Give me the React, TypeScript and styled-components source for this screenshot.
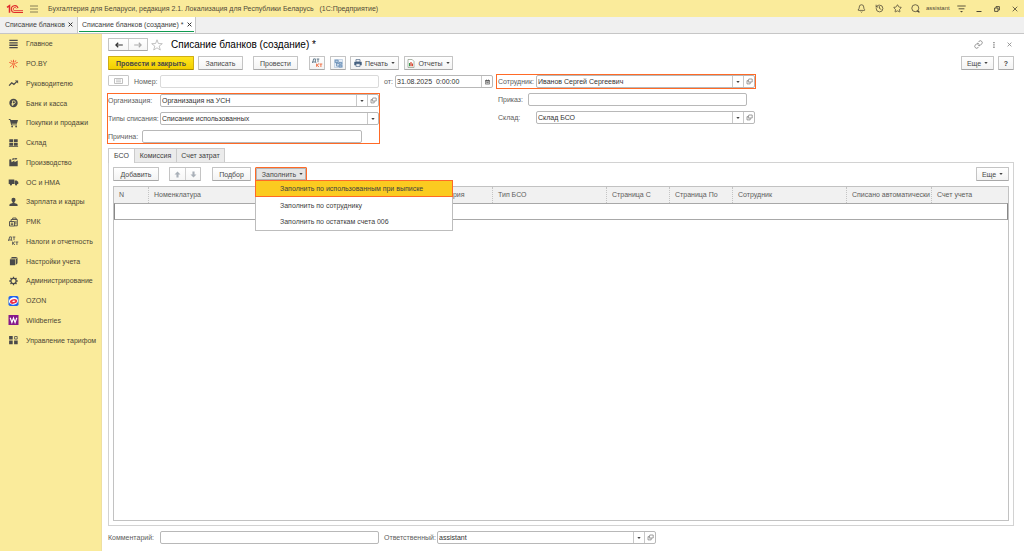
import React from 'react';
import styled, { createGlobalStyle, css } from 'styled-components';
import { Bell, History, Star, Link } from 'lucide-react';

const Global = createGlobalStyle`
  *, *::before, *::after { box-sizing: border-box; }
  body { margin: 0; background: #fff; }
  body, button, input, select, table {
    font-family: "Liberation Sans", Arial, sans-serif;
    font-size: 7px;
    line-height: 9px;
    color: #404040;
  }
  button, input, select { margin: 0; padding: 0; border: 0; border-radius: 0; background: none; outline: 0; }
  svg { display: block; flex: none; }
`;

const line = '#c6c6c6';
const accent = '#ff6a26';

const Page = styled.div`
  display: flex;
  flex-direction: column;
  min-height: 100vh;
`;

const TopBar = styled.header`
  display: flex;
  align-items: center;
  height: 17px;
  padding-left: 6px;
  background: #faeb9b;
  color: #504a38;
`;

const AppTitle = styled.span`
  margin-left: 5px;
  flex: 1;
  white-space: pre;
`;

const BarIcon = styled.button<{ $w?: number }>`
  display: flex;
  justify-content: center;
  align-items: center;
  flex: none;
  width: ${(p) => p.$w ?? 18}px;
  height: 15px;
  color: #4c4636;
`;

const UserName = styled.span`
  width: 26px;
  margin-left: 2px;
  font-size: 6px;
`;

const WindowTabs = styled.nav`
  display: flex;
  height: 17px;
  background: #f0f0f0;
  border-bottom: 1px solid ${line};
`;

const WindowTab = styled.div<{ $active?: boolean }>`
  display: flex;
  padding: 0 1px;
  border-right: 1px solid ${line};
  background: ${(p) => (p.$active ? '#fff' : 'transparent')};
`;

const TabLink = styled.a`
  color: #404040;
  text-decoration: none;
  white-space: nowrap;
`;

const TabInner = styled.div<{ $active?: boolean }>`
  display: flex;
  align-items: center;
  gap: 3px;
  height: 15px;
  padding: 0 ${(p) => (p.$active ? 2 : 3)}px 0 ${(p) => (p.$active ? 3 : 4)}px;
  border-bottom: 1px solid ${(p) => (p.$active ? '#0f9a50' : 'transparent')};
`;

const Body = styled.div`
  display: flex;
  flex: 1;
`;

const Sidebar = styled.nav`
  flex: none;
  width: 102px;
  background: #faeb9b;
  border-right: 1px solid #efe0a0;
`;

const SideList = styled.ul`
  display: grid;
  grid-auto-rows: 1fr;
  height: 316px;
  margin: 0;
  padding: 0;
  list-style: none;
`;

const SideLink = styled.a`
  display: flex;
  align-items: center;
  gap: 7px;
  height: 100%;
  padding-left: 8px;
  color: #4c4636;
  text-decoration: none;
  white-space: nowrap;
`;

const Main = styled.main`
  display: flex;
  flex-direction: column;
  flex: 1;
  min-width: 0;
  padding: 4px 10px 7px 6px;
`;

const Heading = styled.div`
  display: flex;
  align-items: center;
  height: 13px;
`;

const Title = styled.h1`
  flex: 1;
  margin: 0 0 0 5px;
  font-size: 10px;
  line-height: 13px;
  font-weight: 400;
  color: #000;
`;

const Bar = styled.div<{ $top?: number }>`
  display: flex;
  align-items: center;
  height: 14px;
  margin-top: ${(p) => p.$top ?? 0}px;
`;

const Spacer = styled.span`
  flex: 1;
`;

const Button = styled.button<{ $w: number; $ml?: number; $primary?: boolean; $open?: boolean }>`
  display: flex;
  align-items: center;
  justify-content: center;
  gap: 3px;
  flex: none;
  width: ${(p) => p.$w}px;
  height: 14px;
  margin-left: ${(p) => p.$ml ?? 0}px;
  border: 1px solid #c4c4c4;
  border-bottom-color: #a8a8a8;
  border-radius: 1px;
  background: linear-gradient(#fff, #f3f3f3);
  color: #484848;
  white-space: nowrap;
  ${(p) => p.$primary && css`
    border-color: #cfae14;
    border-bottom-color: #a98c00;
    background: linear-gradient(#ffe51f, #f2cf00);
    font-weight: 700;
  `}
  ${(p) => p.$open && css`
    padding-left: 3px;
    border-color: ${accent};
    background: #e4e4e4;
    box-shadow: inset 0 0 0 1px #b4b4b4;
  `}
`;

const Pair = styled.div<{ $ml?: number }>`
  display: flex;
  flex: none;
  margin-left: ${(p) => p.$ml ?? 0}px;
  border: 1px solid #c4c4c4;
  border-bottom-color: #a8a8a8;
  border-radius: 1px;
  background: linear-gradient(#fff, #f6f6f6);
`;

const PairButton = styled.button<{ $w: number; $tall?: boolean }>`
  display: flex;
  align-items: center;
  justify-content: center;
  width: ${(p) => p.$w}px;
  height: ${(p) => (p.$tall ? 12 : 11)}px;
  & + & { border-left: 1px solid #d0d0d0; }
`;

const Form = styled.div`
  display: flex;
  gap: 3px;
  margin-top: 5px;
`;

const LeftColumn = styled.div`
  flex: none;
  width: 385px;
  display: flex;
  flex-direction: column;
  gap: 5px;
`;

const RightColumn = styled.div`
  display: flex;
  flex-direction: column;
  gap: 5px;
  padding-left: 2px;
`;

const Row = styled.div`
  display: flex;
  align-items: center;
  height: 13px;
`;

const Highlight = styled.div<{ $w: number }>`
  display: flex;
  flex-direction: column;
  gap: 5px;
  width: ${(p) => p.$w}px;
  border: 1px solid ${accent};
`;

const GroupBox = styled(Highlight)`
  margin-left: -1px;
`;

const EmployeeBox = styled(Highlight)`
  margin: -1px 0 -1px -2px;
  padding-left: 1px;
`;

const Label = styled.label<{ $w: number; $ml?: number }>`
  flex: none;
  width: ${(p) => p.$w}px;
  margin-left: ${(p) => p.$ml ?? 0}px;
  color: #5c5c5c;
  white-space: nowrap;
`;

const Field = styled.div<{ $w: number; $dim?: boolean }>`
  display: flex;
  flex: none;
  width: ${(p) => p.$w}px;
  height: 13px;
  border: 1px solid ${(p) => (p.$dim ? '#dadada' : '#b8b8b8')};
  border-radius: 2px;
  background: #fff;
`;

const control = css`
  flex: 1;
  min-width: 0;
  height: 11px;
  padding: 0 1px;
  line-height: 11px;
  color: #333;
`;

const TextInput = styled.input`
  ${control}
`;

const SelectWrap = styled.span`
  display: flex;
  flex: 1;
`;

const Select = styled.select`
  ${control}
  appearance: none;
`;

const Cell = styled.span`
  display: flex;
  align-items: center;
  justify-content: center;
  flex: none;
  width: 11px;
  border-left: 1px solid #c8c8c8;
`;

const CellButton = styled(Cell).attrs({ as: 'button' })`
  height: 11px;
`;

const FormIconButton = styled.button`
  display: flex;
  align-items: center;
  justify-content: center;
  width: 21px;
  height: 11px;
  margin-bottom: 2px;
  border: 1px solid #c8c8c8;
  border-radius: 1px;
`;

const Tabs = styled.div`
  display: flex;
  height: 14px;
  margin-top: 4px;
`;

const Tab = styled.button<{ $w: number; $active?: boolean }>`
  position: relative;
  width: ${(p) => p.$w}px;
  height: ${(p) => (p.$active ? 15 : 14)}px;
  padding-bottom: ${(p) => (p.$active ? 1 : 0)}px;
  border: 1px solid #cbcbcb;
  border-bottom: 0;
  background: ${(p) => (p.$active ? '#fff' : '#ebebeb')};
  & + & { border-left: 0; }
`;

const Panel = styled.section`
  display: flex;
  flex-direction: column;
  flex: 1;
  padding: 4px;
  border: 1px solid #d2d2d2;
`;

const MenuAnchor = styled.div`
  position: relative;
  margin-left: 4px;
`;

const Menu = styled.div`
  position: absolute;
  z-index: 2;
  top: 13px;
  left: 0;
  width: 198px;
  padding-bottom: 1px;
  border: 1px solid #bdbdbd;
  border-top: 0;
  background: #fff;
`;

const MenuItem = styled.button<{ $active?: boolean }>`
  display: block;
  width: 100%;
  height: 16px;
  padding-left: 24px;
  text-align: left;
  ${(p) => p.$active && css`
    width: 198px;
    height: 17px;
    margin-left: -1px;
    border: 1px solid ${accent};
    background: #fbcb20;
  `}
`;

const GridFrame = styled.div`
  flex: 1;
  margin-top: 5px;
  border: 1px solid #c2c2c2;
`;

const Grid = styled.table`
  width: 100%;
  table-layout: fixed;
  border-collapse: separate;
  border-spacing: 0;
  th {
    height: 16px;
    padding: 0 0 1px 5px;
    border-right: 1px dotted #c4c4c4;
    background: #f1f1f1;
    color: #5c5c5c;
    font-weight: 400;
    text-align: left;
    white-space: nowrap;
  }
  th:last-child { border-right: 0; }
  td {
    height: 17px;
    padding: 0;
    border: 1px solid #a8a8a8;
    border-left-color: #888;
    border-right-color: #888;
  }
`;

const Footer = styled.div`
  display: flex;
  align-items: center;
  height: 13px;
  margin-top: 5px;
`;

const Caret = () => (
  <svg width="4" height="2" viewBox="0 0 4 2"><path d="M.3 0h3.400L2 2z" fill="#444" /></svg>
);

const OpenGlyph = () => (
  <svg width="7" height="7" viewBox="0 0 7 7" fill="none" stroke="#777" strokeWidth=".7">
    <path d="M2.800 1h3.400v3H2.100zM2.200 2.600H1v3.300h3.200V4.200" />
  </svg>
);

const Cross = ({ size = 5, color = '#333', w = 1.2 }: { size?: number; color?: string; w?: number }) => (
  <svg width={size} height={size} viewBox="0 0 6 6" stroke={color} strokeWidth={w}><path d="M.7.7l4.6 4.6M5.3.7L.7 5.3" /></svg>
);

const Arrow = ({ turn, color }: { turn: number; color: string }) => (
  <svg width="8" height="8" viewBox="0 0 8 8" fill="none" stroke={color} strokeWidth="1.2">
    <path d="M7.8 4H.9M3.200 1.800L.9 4l2.300 2.200" transform={`rotate(${turn} 4 4)`} />
  </svg>
);

const FatArrow = ({ down }: { down?: boolean }) => (
  <svg width="7" height="7" viewBox="0 0 8 8" fill="#a9b0b8">
    <path d="M4 .6L7.4 4H5.2v3.4H2.8V4H.6z" transform={down ? 'rotate(180 4 4)' : undefined} />
  </svg>
);

const Logo = () => (
  <svg width="18" height="10" viewBox="0 0 18 10" fill="none" stroke="#e02a2c">
    <path d="M1 3.300L3.500 1.600v7.200" strokeWidth="1.500" />
    <path d="M12 4.200A3.400 3.400 0 1 0 8.800 8.500h8.200" strokeWidth="1.100" />
    <path d="M10.300 4.400A1.600 1.600 0 1 0 8.800 6.700h8.200" strokeWidth=".9" />
  </svg>
);

const DtKt = ({ dark }: { dark?: boolean }) => (
  <svg width="11" height="10" viewBox="0 0 11 10" fill="none" strokeWidth=".9">
    <path stroke={dark ? '#555' : '#5a7284'} d="M.4 4.9V4h.5L1.600.9h1.800V4H.5M3.800 4v.9M4.700 1h2.600M6 1v3.200" />
    <path stroke={dark ? '#555' : '#ef6a3c'} d="M4.600 5.600v3.200M7 5.600L4.900 7.200 7 8.800M7.500 6h2.800M8.900 6v3" />
  </svg>
);

const icons: Record<string, React.ReactNode> = {
  home: <path d="M.8.8h8.400v1.300H.8zM.8 3.200h8.400v1.300H.8zM.8 5.600h8.400v1.300H.8zM.8 8h8.400v1.300H.8z" />,
  roby: (
    <g fill="none" stroke="#ee4a26" strokeWidth=".9">
      <path d="M5 .8v2.400M5 9.200V6.800M.8 3.400l2.400.9M9.200 3.400l-2.400.9M1.600 8.200l2-2M8.400 8.200l-2-2M2.600 1.400l1.200 1.800M7.400 1.400L6.200 3.200" />
      <circle cx="5" cy="5" r="1" />
    </g>
  ),
  chart: (
    <g><path d="M.6 7.600L3.200 4.800l2.200 1.600L8.200 3.600" fill="none" stroke="#4a4a4a" strokeWidth="1.300" /><path d="M6.400 2.400h3.200v3.200z" /></g>
  ),
  bank: (
    <g><circle cx="5" cy="5" r="4.200" /><path d="M4 7.800V2.900h1.500a1.300 1.300 0 0 1 0 2.700H3M3 6.700h2.600" fill="none" stroke="#faeb9b" strokeWidth=".8" /></g>
  ),
  cart: <g><path d="M.3 1h1.600l.4 1h7.200L8.400 5.800H3.200l.2.700h5v.8H2.700L1.400 1.900H.3z" /><circle cx="3.600" cy="8.500" r=".9" /><circle cx="7.600" cy="8.500" r=".9" /></g>,
  store: <path d="M.8 1.200h3.800v3H.8zM5.400 1.200h3.800v3H5.400zM.8 5h3.800v2.700H.8zM5.400 5h3.800v2.700H5.400zM.4 8.300h9.200v.8H.4z" />,
  factory: <path d="M.8 9.200V2.600l1.800-.4.5 3 2.900-1.700v1.700L9.200 3.500v5.700zM3.400 2.400c.6-1.600 1.800-1.300 2.500-.9 1-.9 2.400-.6 3-.1-.8 1.400-2 1.300-2.800.9-.8.600-1.900.5-2.700.1z" />,
  truck: <g><path d="M.2 2.400h5.600v4.600H.2zM6.200 3.400h2L9.800 5v2H6.200z" /><circle cx="2.400" cy="7.400" r="1.100" /><circle cx="7.600" cy="7.400" r="1.100" /></g>,
  person: <path d="M5 .8a2 2 0 0 1 2 2.200c0 1-.6 1.700-1.100 2.100v.8l2.900 1.200.4 2H.8l.4-2 2.900-1.200v-.8C3.600 4.700 3 4 3 3A2 2 0 0 1 5 .8z" />,
  register: (
    <g fill="none" stroke="#4a4a4a" strokeWidth=".9"><path d="M1 4.500h5v4.500H1zM2.600 4.500v-2h6.200v6.300H6M4.200 2.400V1h3.400v1.400M2.300 6.200h2.400M2.300 7.600h2.400M7.400 4v3.400" /></g>
  ),
  book: <path d="M1.400 3.200h5.200v6H1.400zM1.800 2.600L3.600 1h5.200L7.200 2.600zM7.200 3.200L9 1.400v5.800L7.200 9z" />,
  gear: (
    <g fill="none" stroke="#4a4a4a"><circle cx="5" cy="5" r="2.600" strokeWidth="1.200" /><path strokeWidth="1.300" d="M5 .8v1.600M5 7.600v1.600M.8 5h1.600M7.600 5h1.600M2 2l1.200 1.200M6.800 6.800L8 8M8 2L6.800 3.200M3.200 6.800L2 8" /></g>
  ),
  ozon: (
    <g>
      <rect width="10" height="10" rx="1.800" fill="#1f62f0" />
      <g transform="rotate(-14 5 5)"><ellipse cx="5" cy="5" rx="4.600" ry="3.700" fill="#fff" /><ellipse cx="5" cy="5.400" rx="3.700" ry="2.300" fill="#f0304a" /><ellipse cx="5.200" cy="5.300" rx="1.500" ry=".7" fill="#fff" /></g>
    </g>
  ),
  wb: (
    <g><rect width="10" height="10" fill="#86198a" /><path d="M1.700 2.800l1.700 4.600L5 3l1.600 4.400 1.700-4.600" fill="none" stroke="#fff" strokeWidth="1.200" /></g>
  ),
  tiles: <g><path d="M.6 1h3.600v3.600H.6zM.6 5.600h3.600v3.600H.6zM5.600 5.600h3.600v3.600H5.600z" /><path d="M6.100 1.500h2.600v2.600H6.100z" fill="none" stroke="#4a4a4a" strokeWidth=".8" /></g>,
};

const sections: [string, string][] = [
  ['home', 'Главное'],
  ['roby', 'РО.BY'],
  ['chart', 'Руководителю'],
  ['bank', 'Банк и касса'],
  ['cart', 'Покупки и продажи'],
  ['store', 'Склад'],
  ['factory', 'Производство'],
  ['truck', 'ОС и НМА'],
  ['person', 'Зарплата и кадры'],
  ['register', 'РМК'],
  ['dtkt', 'Налоги и отчетность'],
  ['book', 'Настройки учета'],
  ['gear', 'Администрирование'],
  ['ozon', 'OZON'],
  ['wb', 'Wildberries'],
  ['tiles', 'Управление тарифом'],
];

const columns: [string, number | undefined][] = [
  ['N', 35],
  ['Номенклатура', undefined],
  ['Серия', 54],
  ['Тип БСО', 114],
  ['Страница С', 63],
  ['Страница По', 63],
  ['Сотрудник', 114],
  ['Списано автоматически', 85],
  ['Счет учета', 76],
];

interface ChoiceProps {
  id: string;
  value: string;
  width: number;
  open?: boolean;
}

const Choice = ({ id, value, width, open }: ChoiceProps) => (
  <Field $w={width}>
    <SelectWrap>
      <Select id={id} defaultValue={value}><option>{value}</option></Select>
      <Cell><Caret /></Cell>
    </SelectWrap>
    {open && <CellButton aria-label="Открыть"><OpenGlyph /></CellButton>}
  </Field>
);

const Text = ({ id, width, dim }: { id: string; width: number; dim?: boolean }) => (
  <Field $w={width} $dim={dim}><TextInput id={id} type="text" /></Field>
);

export default function App() {
  return (
    <Page>
      <Global />
      <TopBar>
        <Logo />
        <BarIcon $w={19} aria-label="Меню">
          <svg width="8" height="8" viewBox="0 0 8 8" stroke="#6a6248" strokeWidth=".8"><path d="M0 1h8M0 4h8M0 7h8" /></svg>
        </BarIcon>
        <AppTitle>{'Бухгалтерия для Беларуси, редакция 2.1. Локализация для Республики Беларусь   (1С:Предприятие)'}</AppTitle>
        <BarIcon aria-label="Уведомления"><Bell size={9} /></BarIcon>
        <BarIcon aria-label="История"><History size={9} /></BarIcon>
        <BarIcon aria-label="Избранное"><Star size={9} /></BarIcon>
        <BarIcon aria-label="Поиск">
          <svg width="9" height="9" viewBox="0 0 9 9" fill="none" stroke="#4c4636" strokeWidth=".8"><circle cx="4.300" cy="4.200" r="3.500" /><path d="M5.800 7.200h1.400l1.200 1.300" strokeWidth="1.200" /></svg>
        </BarIcon>
        <UserName>assistant</UserName>
        <BarIcon aria-label="Настройки">
          <svg width="9" height="8" viewBox="0 0 9 8" stroke="#4c4636" strokeWidth=".9"><path d="M.3 1h8.400M1.600 3.800h5.800" /><path d="M3 6h3L4.500 7.600z" fill="#4c4636" stroke="none" /></svg>
        </BarIcon>
        <BarIcon aria-label="Свернуть">
          <svg width="6" height="8" viewBox="0 0 6 8" stroke="#4c4636"><path d="M.5 6.500h5" /></svg>
        </BarIcon>
        <BarIcon aria-label="Развернуть">
          <svg width="6" height="6" viewBox="0 0 6 6" stroke="#4c4636" strokeWidth=".9" fill="none"><path d="M.6 2h3.400v3.400H.6zM2 1.800V.6h3.400V4H4.200" /></svg>
        </BarIcon>
        <BarIcon aria-label="Закрыть"><Cross size={6} color="#4c4636" w={0.8} /></BarIcon>
      </TopBar>

      <WindowTabs aria-label="Открытые окна">
        <WindowTab>
          <TabInner><TabLink href="#list">Списание бланков</TabLink><button aria-label="Закрыть вкладку"><Cross /></button></TabInner>
        </WindowTab>
        <WindowTab $active>
          <TabInner $active><TabLink href="#new">Списание бланков (создание) *</TabLink><button aria-label="Закрыть вкладку"><Cross /></button></TabInner>
        </WindowTab>
      </WindowTabs>

      <Body>
        <Sidebar aria-label="Разделы">
          <SideList>
            {sections.map(([icon, name]) => (
              <li key={name}>
                <SideLink href={`#${icon}`}>
                  {icon === 'dtkt' ? <DtKt dark /> : <svg width="11" height="10" viewBox="0 0 10 10" fill="#4a4a4a">{icons[icon]}</svg>}
                  {name}
                </SideLink>
              </li>
            ))}
          </SideList>
        </Sidebar>

        <Main>
          <Heading>
            <Pair>
              <PairButton $w={19} aria-label="Назад"><Arrow turn={0} color="#333" /></PairButton>
              <PairButton $w={19} aria-label="Вперед"><Arrow turn={180} color="#aaa" /></PairButton>
            </Pair>
            <BarIcon $w={18} aria-label="В избранное">
              <svg width="12" height="12" viewBox="0 0 12 12" fill="none" stroke="#b4b4b4" strokeWidth=".8">
                <path d="M6 .8l1.400 3.700 3.900.2-3.100 2.400 1.100 3.900L6 8.800 2.700 11l1.100-3.900L.7 4.700l3.900-.2z" />
              </svg>
            </BarIcon>
            <Title>Списание бланков (создание) *</Title>
            <BarIcon $w={10} aria-label="Ссылка"><Link size={9} color="#777" /></BarIcon>
            <BarIcon $w={22} aria-label="Меню формы">
              <svg width="2" height="8" viewBox="0 0 2 8" fill="#777"><path d="M.3 1h1.300v1.300H.3zM.3 3.300h1.300v1.300H.3zM.3 5.600h1.300v1.300H.3z" /></svg>
            </BarIcon>
            <BarIcon $w={9} aria-label="Закрыть форму"><Cross color="#888" w={1} /></BarIcon>
          </Heading>

          <Bar $top={5}>
            <Button $w={86} $primary>Провести и закрыть</Button>
            <Button $w={45} $ml={4}>Записать</Button>
            <Button $w={45} $ml={10}>Провести</Button>
            <Button $w={16} $ml={11} aria-label="Показать проводки"><DtKt /></Button>
            <Button $w={16} $ml={5} aria-label="Структура подчиненности">
              <svg width="9" height="9" viewBox="0 0 9 9" fill="none" stroke="#5f86b0" strokeWidth=".8">
                <path d="M.5.500h8v8h-8z" fill="#e6eef7" stroke="#a9bfd8" strokeWidth=".6" />
                <path d="M1.200 1.200h3v2.400h-3zM5 3.400h2.800v1.800H5zM5 6.200h2.800v1.800H5z" fill="#b8cee4" />
                <path d="M2.600 3.600v3.500H5M2.600 4.700H5" />
              </svg>
            </Button>
            <Button $w={49} $ml={4}>
              <svg width="8" height="8" viewBox="0 0 9 9">
                <path d="M.3 3.200h8.400v3.800H.3z" fill="#45607f" /><path d="M2.200.7h4.600v2.500H2.200zM2.200 5.400h4.600v2.900H2.200z" fill="#fff" stroke="#45607f" strokeWidth=".8" />
              </svg>
              Печать <Caret />
            </Button>
            <Button $w={49} $ml={5}>
              <svg width="8" height="9" viewBox="0 0 8 9">
                <path d="M1 .5h4.200l1.800 2v6H1z" fill="#fff" stroke="#8b9a86" strokeWidth=".7" /><path d="M2 4h1.200v3.200H2z" fill="#3a9a4c" /><path d="M3.400 3h1.200v4.200H3.400z" fill="#d8432f" /><path d="M4.800 4.600H6v2.600H4.800z" fill="#d8432f" />
              </svg>
              Отчеты <Caret />
            </Button>
            <Spacer />
            <Button $w={33}>Еще <Caret /></Button>
            <Button $w={16} $ml={4} aria-label="Справка"><b>?</b></Button>
          </Bar>

          <Form>
            <LeftColumn>
              <Row>
                <FormIconButton aria-label="Состояние">
                  <svg width="9" height="6" viewBox="0 0 9 6" fill="none" stroke="#b0b0b0" strokeWidth=".8"><path d="M.5.500h8v5h-8zM2 2h5M2 3.800h5" /></svg>
                </FormIconButton>
                <Label htmlFor="number" $w={26} $ml={5}>Номер:</Label>
                <Text id="number" width={219} dim />
                <Label htmlFor="date" $w={11} $ml={5}>от:</Label>
                <Field $w={98}>
                  <TextInput id="date" type="text" defaultValue="31.08.2025  0:00:00" />
                  <CellButton aria-label="Календарь">
                    <svg width="5" height="6" viewBox="0 0 6 6"><path d="M.5 1.200h5v4.300h-5z" fill="none" stroke="#555" strokeWidth=".8" /><path d="M.5 1h5v1.400h-5zM1.300 0h.8v1h-.8zM3.900 0h.8v1h-.8zM1.500 3.200h3v1.200h-3z" fill="#555" /></svg>
                  </CellButton>
                </Field>
              </Row>
              <GroupBox $w={273}>
                <Row>
                  <Label htmlFor="org" $w={52}>Организация:</Label>
                  <Choice id="org" value="Организация на УСН" width={219} open />
                </Row>
                <Row>
                  <Label htmlFor="kind" $w={52}>Типы списания:</Label>
                  <Choice id="kind" value="Списание использованных" width={219} />
                </Row>
                <Row>
                  <Label htmlFor="reason" $w={34}>Причина:</Label>
                  <Text id="reason" width={220} />
                </Row>
              </GroupBox>
            </LeftColumn>
            <RightColumn>
              <EmployeeBox $w={260}>
                <Row>
                  <Label htmlFor="employee" $w={38}>Сотрудник:</Label>
                  <Choice id="employee" value="Иванов Сергей Сергеевич" width={219} open />
                </Row>
              </EmployeeBox>
              <Row>
                <Label htmlFor="order" $w={30}>Приказ:</Label>
                <Text id="order" width={219} />
              </Row>
              <Row>
                <Label htmlFor="store" $w={38}>Склад:</Label>
                <Choice id="store" value="Склад БСО" width={219} open />
              </Row>
            </RightColumn>
          </Form>

          <Tabs role="tablist">
            <Tab $w={27} $active role="tab" aria-selected>БСО</Tab>
            <Tab $w={42} role="tab">Комиссия</Tab>
            <Tab $w={48} role="tab">Счет затрат</Tab>
          </Tabs>
          <Panel>
            <Bar>
              <Button $w={46}>Добавить</Button>
              <Pair $ml={10}>
                <PairButton $w={15} $tall aria-label="Вверх"><FatArrow /></PairButton>
                <PairButton $w={15} $tall aria-label="Вниз"><FatArrow down /></PairButton>
              </Pair>
              <Button $w={39} $ml={11}>Подбор</Button>
              <MenuAnchor>
                <Button $w={52} $open aria-haspopup="menu" aria-expanded>Заполнить <Caret /></Button>
                <Menu role="menu">
                  <MenuItem role="menuitem" $active>Заполнить по использованным при выписке</MenuItem>
                  <MenuItem role="menuitem">Заполнить по сотруднику</MenuItem>
                  <MenuItem role="menuitem">Заполнить по остаткам счета 006</MenuItem>
                </Menu>
              </MenuAnchor>
              <Spacer />
              <Button $w={33}>Еще <Caret /></Button>
            </Bar>
            <GridFrame>
              <Grid>
                <colgroup>
                  {columns.map(([name, width]) => <col key={name} width={width} />)}
                </colgroup>
                <thead>
                  <tr>{columns.map(([name]) => <th key={name} scope="col">{name}</th>)}</tr>
                </thead>
                <tbody>
                  <tr><td colSpan={columns.length} /></tr>
                </tbody>
              </Grid>
            </GridFrame>
          </Panel>

          <Footer>
            <Label htmlFor="comment" $w={52}>Комментарий:</Label>
            <Text id="comment" width={219} />
            <Label htmlFor="owner" $w={53} $ml={5}>Ответственный:</Label>
            <Choice id="owner" value="assistant" width={219} open />
          </Footer>
        </Main>
      </Body>
    </Page>
  );
}
